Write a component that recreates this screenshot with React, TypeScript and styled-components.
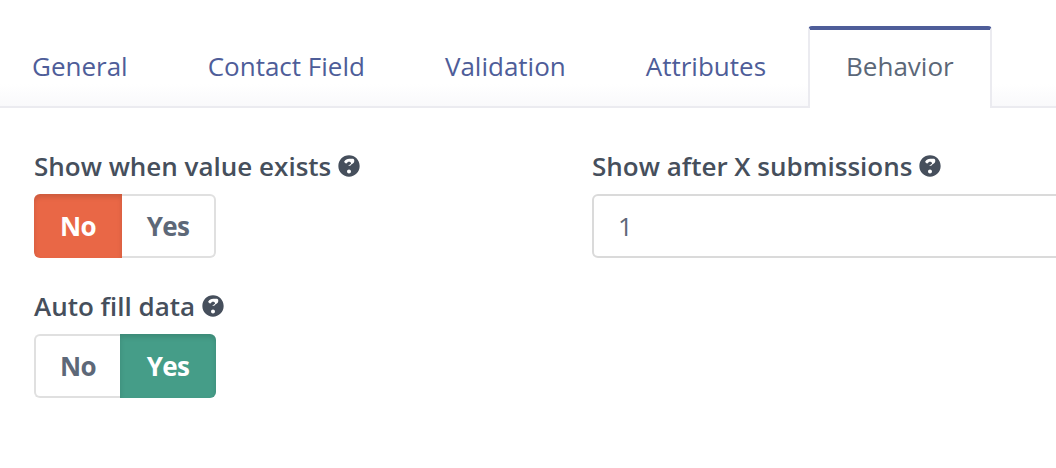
import React from 'react';
import styled, { createGlobalStyle } from 'styled-components';

const GlobalStyle = createGlobalStyle`
  html, body {
    margin: 0;
    padding: 0;
    background: #fff;
    overflow: hidden;
  }
  body {
    font-family: "Open Sans", "Liberation Sans", sans-serif;
  }
`;

const Page = styled.div`
  width: 1056px;
  height: 468px;
  overflow: hidden;
`;

const TabBar = styled.div`
  display: flex;
  align-items: flex-end;
  height: 108px;
  padding: 26px 0 0 32px;
  box-sizing: border-box;
  border-bottom: 2px solid #ebebf0;
  background: linear-gradient(to bottom, #fff 84px, #f9f9fb 106px);
`;

const Tab = styled.div<{ $active?: boolean; $gap: number }>`
  box-sizing: border-box;
  height: ${(p) => (p.$active ? '82px' : 'auto')};
  margin-right: ${(p) => p.$gap}px;
  margin-bottom: ${(p) => (p.$active ? '-2px' : '0')};
  padding: ${(p) => (p.$active ? '18px 36px 0' : '0 0 22px')};
  font-size: 26px;
  line-height: 36px;
  color: ${(p) => (p.$active ? '#5b6778' : '#4e5d99')};
  background: ${(p) => (p.$active ? '#fff' : 'transparent')};
  border: ${(p) => (p.$active ? '2px solid #ebebf0' : 'none')};
  border-bottom: none;
  border-top: ${(p) => (p.$active ? '4px solid #4e5d99' : 'none')};
  border-radius: ${(p) => (p.$active ? '4px 4px 0 0' : '0')};
`;

const Form = styled.div`
  display: grid;
  grid-template-columns: 558px 500px;
  padding: 43px 0 0 34px;
`;

const Column = styled.div`
  display: flex;
  flex-direction: column;
  gap: 33px;
`;

const Field = styled.div`
  display: flex;
  flex-direction: column;
`;

const Label = styled.div`
  display: flex;
  align-items: center;
  gap: 7px;
  height: 30px;
  margin-bottom: 13px;
  font-size: 26px;
  font-weight: 600;
  color: #464f5c;
  white-space: nowrap;
`;

const HelpIcon = styled.svg`
  width: 22px;
  height: 22px;
  flex: none;
`;

const Toggle = styled.div`
  display: flex;
  width: 182px;
  height: 64px;
`;

const ToggleButton = styled.div<{ $on?: string; $side: 'left' | 'right'; $width: number }>`
  display: flex;
  align-items: center;
  justify-content: center;
  box-sizing: border-box;
  width: ${(p) => p.$width}px;
  font-size: 26px;
  font-weight: 700;
  letter-spacing: -0.6px;
  color: ${(p) => (p.$on ? '#fff' : '#5d6878')};
  background: ${(p) => p.$on || '#fff'};
  border: ${(p) => (p.$on ? 'none' : '2px solid #e0e0e0')};
  border-${(p) => (p.$side === 'left' ? 'right' : 'left')}: none;
  border-radius: ${(p) => (p.$side === 'left' ? '6px 0 0 6px' : '0 6px 6px 0')};
  box-shadow: ${(p) => (p.$on ? 'inset 0 3px 5px rgba(0, 0, 0, 0.13)' : 'none')};
`;

const NumberBox = styled.div`
  display: flex;
  align-items: center;
  box-sizing: border-box;
  width: 500px;
  height: 64px;
  padding-left: 24px;
  font-size: 26px;
  color: #5d6878;
  border: 2px solid #dadada;
  border-radius: 6px;
`;

const Help = () => (
  <HelpIcon viewBox="0 0 512 512">
    <path
      fill="#464f5c"
      d="M504 256c0 137-111 248-248 248S8 393 8 256C8 119 119 8 256 8s248 111 248 248zM262.700 90c-54.500 0-89.300 23-116.500 63.800-3.500 5.300-2.400 12.400 2.700 16.300l34.700 26.300c5.200 3.900 12.600 3 16.700-2.100 17.900-22.700 30.100-35.800 57.300-35.800 20.400 0 45.700 13.100 45.700 33 0 15-12.400 22.700-32.600 34-23.600 13.200-54.800 29.700-54.800 70.900V240c0 6.600 5.400 12 12 12h56c6.600 0 12-5.400 12-12v-1.300c0-28.600 83.500-29.800 83.500-107.200C380 73.300 319.600 90 262.700 90zM256 338c-25.400 0-46 20.600-46 46 0 25.400 20.600 46 46 46s46-20.600 46-46c0-25.400-20.600-46-46-46z"
    />
  </HelpIcon>
);

const tabs = [
  { name: 'General', gap: 80 },
  { name: 'Contact Field', gap: 80 },
  { name: 'Validation', gap: 80 },
  { name: 'Attributes', gap: 42 },
];

const App: React.FC = () => (
  <Page>
    <GlobalStyle />
    <TabBar>
      {tabs.map((t) => (
        <Tab key={t.name} $gap={t.gap}>
          {t.name}
        </Tab>
      ))}
      <Tab $active $gap={0}>
        Behavior
      </Tab>
    </TabBar>
    <Form>
      <Column>
        <Field>
          <Label>
            Show when value exists <Help />
          </Label>
          <Toggle>
            <ToggleButton $side="left" $width={88} $on="#e96746">
              No
            </ToggleButton>
            <ToggleButton $side="right" $width={94}>
              Yes
            </ToggleButton>
          </Toggle>
        </Field>
        <Field>
          <Label>
            Auto fill data <Help />
          </Label>
          <Toggle>
            <ToggleButton $side="left" $width={86}>
              No
            </ToggleButton>
            <ToggleButton $side="right" $width={96} $on="#459d88">
              Yes
            </ToggleButton>
          </Toggle>
        </Field>
      </Column>
      <Column>
        <Field>
          <Label>
            Show after X submissions <Help />
          </Label>
          <NumberBox>1</NumberBox>
        </Field>
      </Column>
    </Form>
  </Page>
);

export default App;
